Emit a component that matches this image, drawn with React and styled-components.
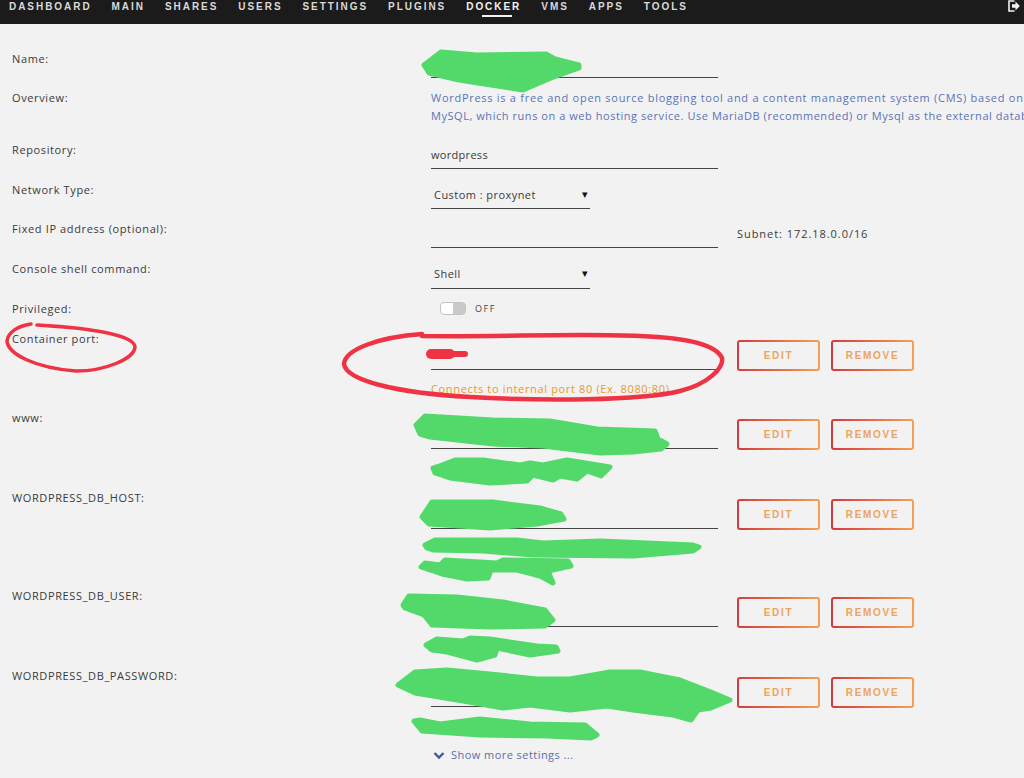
import React from "react";
import styled, { createGlobalStyle } from "styled-components";

const GlobalStyle = createGlobalStyle`
  html, body {
    margin: 0;
    padding: 0;
    background: #f2f2f2;
    overflow: hidden;
  }
  body {
    font-family: "Open Sans", "Liberation Sans", sans-serif;
    font-size: 11px;
    color: #333;
  }
`;

const Page = styled.div`
  position: relative;
  width: 1024px;
  height: 778px;
  overflow: hidden;
  background: #f2f2f2;
`;

// Top navigation
const NavBar = styled.nav`
  display: flex;
  align-items: flex-start;
  height: 23px;
  padding: 1px 0 0 9px;
  background: #1c1b1b;
  position: relative;
`;

const NavItem = styled.a`
  position: relative;
  margin-right: 20px;
  font-family: "Liberation Sans", sans-serif;
  font-size: 10px;
  font-weight: 700;
  line-height: 12px;
  letter-spacing: 1.95px;
  color: ${(p) => (p.$active ? "#f2f2f2" : "#d9d9d9")};
  white-space: nowrap;
  &::after {
    content: "";
    display: ${(p) => (p.$active ? "block" : "none")};
    position: absolute;
    left: 16px;
    right: 9px;
    top: 14px;
    height: 2px;
    background: #f2f2f2;
  }
`;

const LogoutIcon = styled.svg`
  position: absolute;
  right: 4px;
  top: 0;
  width: 12px;
  height: 12px;
`;

// Form
const Form = styled.div`
  padding: 28px 0 0 12px;
`;

const Row = styled.div`
  display: grid;
  grid-template-columns: 419px 287px auto;
  height: ${(p) => p.$h}px;
`;

const Label = styled.div`
  font-size: 11px;
  line-height: 14px;
  letter-spacing: 0.62px;
  color: #3a3a3a;
  white-space: nowrap;
`;

const Field = styled.div`
  display: flex;
  flex-direction: column;
  min-width: 0;
`;

const Input = styled.div`
  box-sizing: border-box;
  height: ${(p) => p.$h || 26}px;
  padding-top: ${(p) => (p.$h || 26) - 21}px;
  border-bottom: 1px solid #444;
  font-size: 11px;
  line-height: 14px;
  letter-spacing: 0.3px;
  color: #3a3a3a;
`;

const Select = styled.div`
  box-sizing: border-box;
  display: flex;
  justify-content: space-between;
  align-items: center;
  width: 159px;
  height: ${(p) => p.$h || 26}px;
  padding: 0 2px 3px 3px;
  border-bottom: 1px solid #444;
  font-size: 11px;
  letter-spacing: 0.45px;
  color: #3a3a3a;
  &::after {
    content: "▾";
    font-family: "DejaVu Sans", sans-serif;
    font-size: 11px;
    color: #111;
  }
`;

const Description = styled.div`
  width: 640px;
  margin-top: -2px;
  font-size: 11px;
  line-height: 18px;
  color: #5b73b8;
  white-space: nowrap;
`;

const DescriptionLine = styled.div`
  letter-spacing: ${(p) => p.$spacing}px;
`;

const Hint = styled.div`
  margin-top: 12px;
  font-size: 11px;
  line-height: 14px;
  letter-spacing: 0.65px;
  color: #e8992f;
  white-space: nowrap;
`;

const Subnet = styled.div`
  padding: 5px 0 0 19px;
  font-size: 11px;
  line-height: 14px;
  letter-spacing: 0.95px;
  color: #3a3a3a;
  white-space: nowrap;
`;

const ToggleWrap = styled.div`
  display: flex;
  align-items: center;
  gap: 9px;
  height: 13px;
  padding-left: 9px;
`;

const Toggle = styled.span`
  display: block;
  width: 26px;
  height: 13px;
  box-sizing: border-box;
  border: 1px solid #c4c4c4;
  border-radius: 4px;
  background: linear-gradient(90deg, #fff 50%, #c9c9c9 50%);
`;

const ToggleText = styled.span`
  font-size: 9px;
  letter-spacing: 1.6px;
  color: #444;
`;

const Actions = styled.div`
  display: flex;
  gap: 11px;
  padding: 8px 0 0 19px;
  align-items: flex-start;
`;

const ActionButton = styled.button`
  box-sizing: border-box;
  width: 83px;
  height: 31px;
  padding: 0;
  border: 2px solid transparent;
  border-radius: 3px;
  background: linear-gradient(#f2f2f2, #f2f2f2) padding-box,
    linear-gradient(90deg, #d43a3e, #f5a052) border-box;
  font-family: "Liberation Sans", sans-serif;
  font-size: 10px;
  font-weight: 700;
  letter-spacing: 1.7px;
  color: #eca45e;
`;

const ShowMore = styled.div`
  display: flex;
  align-items: center;
  gap: 6px;
  padding-left: 421px;
  font-size: 11px;
  line-height: 14px;
  letter-spacing: 0.45px;
  color: #5b6fa8;
`;

const Chevron = styled.svg`
  width: 12px;
  height: 9px;
`;

// The hand drawn marks on top of the screenshot
const Scribbles = styled.svg`
  position: absolute;
  left: 0;
  top: 0;
  width: 1024px;
  height: 778px;
  pointer-events: none;
`;

const greenBlobs = [
  "424,65 441,52 477,55 546,54 555,59 579,65 579,68 565,73 551,78 523,90 459,80 429,73",
  "416,425 425,416 493,420 550,421 597,429 655,431 658,439 667,444 661,449 633,452 600,453 543,446 493,444 430,437 420,434",
  "433,468 442,465 455,460 483,460 520,465 530,463 543,465 567,460 610,467 601,476 587,471 577,479 560,476 553,480 533,475 527,481 490,483 450,478 435,473",
  "422,517 432,502 493,502 540,508 561,514 564,519 537,524 490,528 429,524",
  "425,545 435,540 517,540 543,543 600,541 693,545 699,547 693,551 633,556 533,555 483,551 433,550 427,548",
  "421,567 425,563 440,565 445,560 497,563 503,560 568,561 571,566 548,571 553,583 540,576 517,570 491,570 488,578 467,579 442,574",
  "403,605 409,596 457,597 503,602 545,610 553,620 545,626 490,627 432,625 424,615 405,608",
  "426,645 437,639 463,641 470,638 490,639 537,646 556,647 558,651 530,655 497,648 495,655 477,660 447,652 432,650",
  "398,685 415,672 447,670 490,674 537,679 570,679 610,672 640,672 680,680 711,692 730,700 711,708 698,710 691,720 673,715 633,710 607,706 570,710 530,705 503,708 463,701 415,693",
  "414,721 420,720 440,724 480,719 530,724 585,725 597,735 591,738 547,736 480,735 422,731 417,725",
];

const Blob = styled.polygon`
  fill: #52d96a;
  stroke: #52d96a;
  stroke-width: 5;
  stroke-linejoin: round;
`;

const RedStroke = styled.path`
  fill: none;
  stroke: #ee3344;
  stroke-width: ${(p) => p.$w}px;
  stroke-linecap: round;
`;

function VariableRow({ h, label, hint }) {
  return (
    <Row $h={h}>
      <Label>{label}</Label>
      <Field>
        <Input $h={38} />
        {hint && <Hint>{hint}</Hint>}
      </Field>
      <Actions>
        <ActionButton>EDIT</ActionButton>
        <ActionButton>REMOVE</ActionButton>
      </Actions>
    </Row>
  );
}

function WordPressForm() {
  return (
    <Form>
      <Row $h={39}>
        <Label>Name:</Label>
        <Field>
          <Input />
        </Field>
      </Row>
      <Row $h={52}>
        <Label>Overview:</Label>
        <Field>
          <Description>
            <DescriptionLine $spacing={0.72}>
              WordPress is a free and open source blogging tool and a content management system (CMS) based on PHP and
            </DescriptionLine>
            <DescriptionLine $spacing={0.55}>
              MySQL, which runs on a web hosting service. Use MariaDB (recommended) or Mysql as the external database.
            </DescriptionLine>
          </Description>
        </Field>
      </Row>
      <Row $h={40}>
        <Label>Repository:</Label>
        <Field>
          <Input>wordpress</Input>
        </Field>
      </Row>
      <Row $h={39}>
        <Label>Network Type:</Label>
        <Field>
          <Select>Custom : proxynet</Select>
        </Field>
      </Row>
      <Row $h={40}>
        <Label>Fixed IP address (optional):</Label>
        <Field>
          <Input />
        </Field>
        <Subnet>Subnet: 172.18.0.0/16</Subnet>
      </Row>
      <Row $h={40}>
        <Label>Console shell command:</Label>
        <Field>
          <Select $h={27}>Shell</Select>
        </Field>
      </Row>
      <Row $h={30}>
        <Label>Privileged:</Label>
        <Field>
          <ToggleWrap>
            <Toggle />
            <ToggleText>OFF</ToggleText>
          </ToggleWrap>
        </Field>
      </Row>
      <VariableRow h={79} label="Container port:" hint="Connects to internal port 80 (Ex. 8080:80)" />
      <VariableRow h={80} label="www:" />
      <VariableRow h={98} label="WORDPRESS_DB_HOST:" />
      <VariableRow h={80} label="WORDPRESS_DB_USER:" />
      <VariableRow h={79} label="WORDPRESS_DB_PASSWORD:" />
      <ShowMore>
        <Chevron viewBox="0 0 12 9">
          <path d="M1.5 2 L6 6.5 L10.5 2" fill="none" stroke="#41589e" strokeWidth="2.4" />
        </Chevron>
        Show more settings ...
      </ShowMore>
    </Form>
  );
}

export default function App() {
  const items = ["DASHBOARD", "MAIN", "SHARES", "USERS", "SETTINGS", "PLUGINS", "DOCKER", "VMS", "APPS", "TOOLS"];
  return (
    <Page>
      <GlobalStyle />
      <NavBar>
        {items.map((item) => (
          <NavItem key={item} $active={item === "DOCKER"}>
            {item}
          </NavItem>
        ))}
        <LogoutIcon viewBox="0 0 12 12">
          <path d="M6.5 1 H1 V11 H6.5" fill="none" stroke="#f2f2f2" strokeWidth="1.6" />
          <path d="M4 4.2 H7.5 V1.6 L11.8 6 L7.5 10.4 V7.8 H4 Z" fill="#f2f2f2" />
        </LogoutIcon>
      </NavBar>
      <WordPressForm />
      <Scribbles viewBox="0 0 1024 778">
        {greenBlobs.map((points, i) => (
          <Blob key={i} points={points} />
        ))}
        <RedStroke
          $w={3.5}
          d="M31 324 C18 326 8 332 7 341 C8 354 35 368 76 371 C105 371 134 359 135 347 C134 335 90 328 37 325"
        />
        <RedStroke
          $w={4.5}
          d="M422 334 C380 337 345 349 344 364 C346 380 395 393 470 397 C540 401 640 401 680 391 C708 384 724 368 722 358 C716 345 690 338 640 336 C580 333 500 337 422 336"
        />
        <RedStroke $w={10} d="M431 354 L450 354" />
        <RedStroke $w={6} d="M450 354 L465 354" />
      </Scribbles>
    </Page>
  );
}
